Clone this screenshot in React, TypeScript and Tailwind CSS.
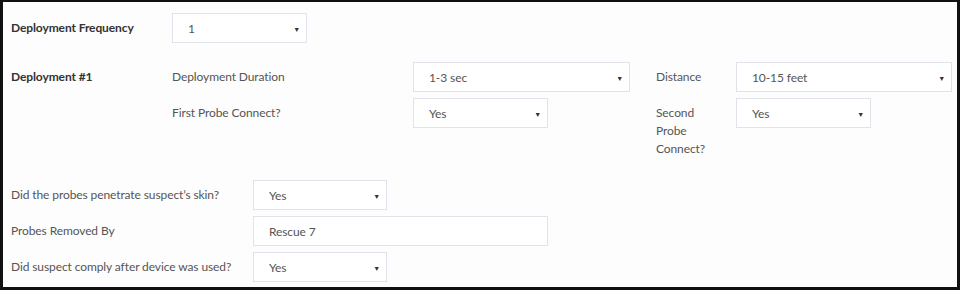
const font = { fontFamily: 'Lato, "Open Sans", sans-serif' };

const Select = ({ value, width }: { value: string; width: string }) => (
  <div
    className={`${width} h-[30px] flex items-center justify-between pl-[15px] pr-[6px] pt-[2px] border border-[#e2e3ea] bg-white text-[12px] tracking-[-0.1px] text-[#555]`}
  >
    <span>{value}</span>
    <span className="text-[7px] text-[#333]">▼</span>
  </div>
);

const Label = ({ children, width, bold }: { children: React.ReactNode; width: string; bold?: boolean }) => (
  <div
    className={`${width} shrink-0 pt-[6px] leading-[18px] text-[12px] tracking-[-0.1px] ${bold ? 'font-bold text-[#333]' : 'text-[#555]'}`}
  >
    {children}
  </div>
);

const App = () => {
  return (
    <div style={font} className="w-[960px] h-[290px] bg-[#111] pt-[2px] pl-[3px] pr-[3px] pb-[3px]">
      <div className="h-full bg-[#fdfdfd] pl-[8px] pt-[11px]">
        <div className="flex items-start">
          <Label width="w-[161px]" bold>Deployment Frequency</Label>
          <Select value="1" width="w-[135px]" />
        </div>

        <div className="flex items-start mt-[19px]">
          <Label width="w-[161px]" bold>Deployment #1</Label>
          <div className="flex flex-col gap-[6px]">
            <div className="flex items-start">
              <Label width="w-[241px]">Deployment Duration</Label>
              <Select value="1-3 sec" width="w-[217px]" />
              <Label width="w-[80px] pl-[26px] box-content">Distance</Label>
              <Select value="10-15 feet" width="w-[216px]" />
            </div>
            <div className="flex items-start">
              <Label width="w-[241px]">First Probe Connect?</Label>
              <Select value="Yes" width="w-[135px]" />
              <div className="w-[82px]" />
              <Label width="w-[54px] pl-[26px] pr-[26px] box-content">Second Probe Connect?</Label>
              <Select value="Yes" width="w-[135px]" />
            </div>
          </div>
        </div>

        <div className="flex flex-col gap-[6px] mt-[22px]">
          <div className="flex items-start">
            <Label width="w-[242px]">Did the probes penetrate suspect’s skin?</Label>
            <Select value="Yes" width="w-[134px]" />
          </div>
          <div className="flex items-start">
            <Label width="w-[242px]">Probes Removed By</Label>
            <div className="w-[295px] h-[30px] flex items-center pl-[15px] pt-[2px] border border-[#e2e3ea] bg-white text-[12px] tracking-[-0.1px] text-[#555]">
              Rescue 7
            </div>
          </div>
          <div className="flex items-start">
            <Label width="w-[242px]">Did suspect comply after device was used?</Label>
            <Select value="Yes" width="w-[134px]" />
          </div>
        </div>
      </div>
    </div>
  );
};

export default App;
